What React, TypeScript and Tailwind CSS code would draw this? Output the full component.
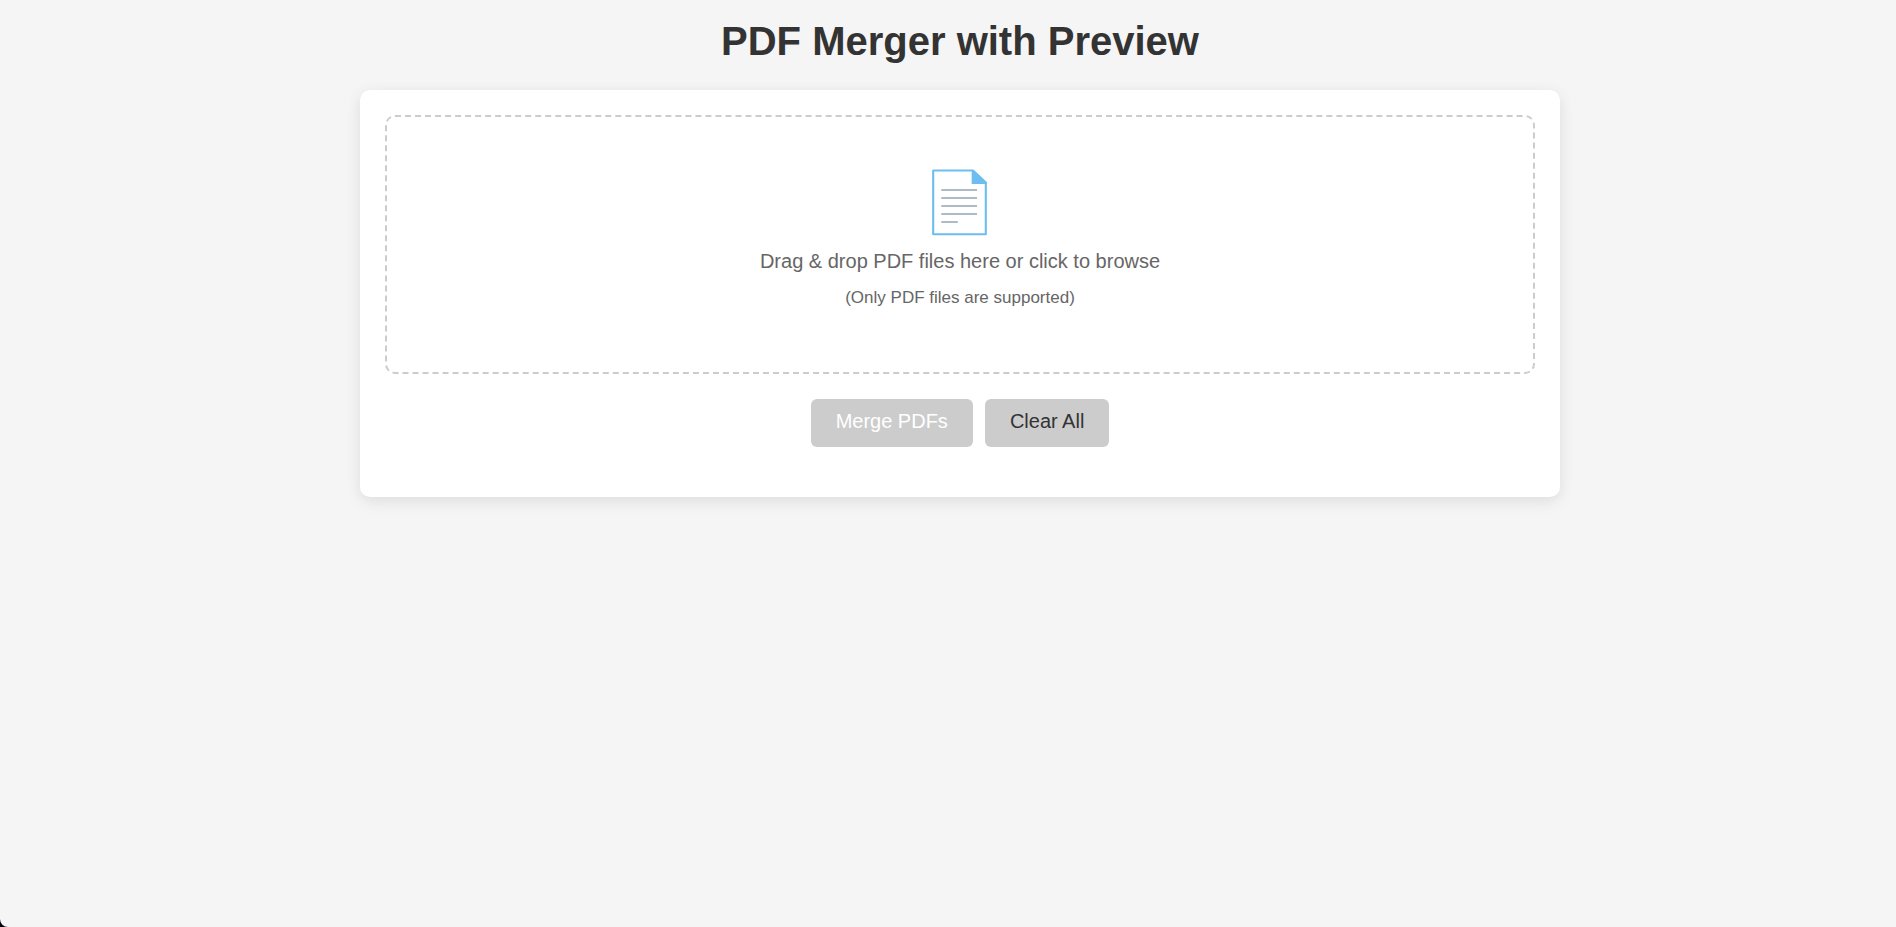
import React, { useRef } from 'react';

function DocumentIcon() {
  return (
    <svg width="56" height="68" viewBox="0 0 56 68" fill="none" aria-hidden="true">
      <path
        d="M1.2 1.5H41L53.8 13.5V65.3H1.2Z"
        fill="#fff"
        stroke="#6dbdf0"
        strokeWidth="2.1"
        strokeLinejoin="round"
      />
      <path d="M39.7 1H41.5L54.5 13.5V15H39.7Z" fill="#6dbdf0" />
      <path
        d="M9.3 20.9H45M9.3 28.9H45M9.3 36.9H45M9.3 44.9H45M9.3 52.9H25.8"
        stroke="#adbbc6"
        strokeWidth="2"
      />
    </svg>
  );
}

function DropZone() {
  const inputRef = useRef<HTMLInputElement>(null);

  return (
    <button
      type="button"
      onClick={() => inputRef.current?.click()}
      className="flex w-full cursor-pointer flex-col items-center rounded-[10px] border-2 border-dashed border-[#ccc] px-5 pt-[52px] pb-[62px] text-[#666]"
    >
      <DocumentIcon />
      <span className="mt-3 text-xl leading-6">Drag &amp; drop PDF files here or click to browse</span>
      <span className="mt-[13px] text-[17px] leading-6">(Only PDF files are supported)</span>
      <input ref={inputRef} type="file" accept=".pdf" multiple aria-label="PDF files" className="hidden" />
    </button>
  );
}

export default function App() {
  return (
    <div className="min-h-screen bg-[#05050f]">
      <div className="min-h-screen rounded-bl-lg bg-[#f5f5f5] pt-5 pr-5 pl-11 font-['Liberation_Sans',Arial,sans-serif] text-[#333]">
        <h1 className="mb-7 text-center text-[40px] leading-[42px] font-bold">PDF Merger with Preview</h1>

        <main className="mx-auto max-w-[1200px] rounded-[10px] bg-white px-[25px] pt-[25px] pb-[50px] shadow-[0_4px_15px_rgba(0,0,0,0.1)]">
          <DropZone />

          <div className="mt-[25px] flex justify-center gap-3">
            <button
              type="button"
              disabled
              className="rounded-md bg-[#ccc] px-[25px] pt-[11px] pb-[14px] text-xl leading-[23px] text-white"
            >
              Merge PDFs
            </button>
            <button
              type="button"
              className="cursor-pointer rounded-md bg-[#ccc] px-[25px] pt-[11px] pb-[14px] text-xl leading-[23px] text-[#333]"
            >
              Clear All
            </button>
          </div>
        </main>
      </div>
    </div>
  );
}
